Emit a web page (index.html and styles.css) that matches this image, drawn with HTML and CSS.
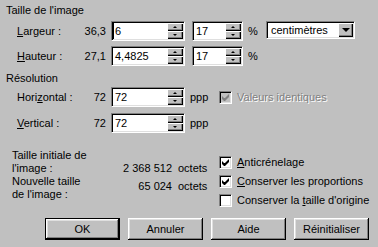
FILE: index.html
```html
<!DOCTYPE html>
<html lang="fr">
<head>
<meta charset="utf-8">
<title>Taille de l'image</title>
<link rel="stylesheet" href="styles.css">
</head>
<body>
<div class="dialog">
  <div class="title">Taille de l'image</div>
  <div class="rows">
    <div class="row">
      <span class="lbl"><u>L</u>argeur :</span>
      <span class="val">36,3</span>
      <div class="spin w74 focus"><span class="txt">6</span><div class="spinbtns"><span class="sb"><i class="up"></i></span><span class="sb"><i class="down"></i></span></div></div>
      <div class="spin w51"><span class="txt">17</span><div class="spinbtns"><span class="sb"><i class="up"></i></span><span class="sb"><i class="down"></i></span></div></div>
      <span class="unit">%</span>
      <div class="combo"><span class="txt">centimètres</span><span class="combo-btn"><i class="down big"></i></span></div>
    </div>
    <div class="row">
      <span class="lbl"><u>H</u>auteur :</span>
      <span class="val">27,1</span>
      <div class="spin w74"><span class="txt">4,4825</span><div class="spinbtns"><span class="sb"><i class="up"></i></span><span class="sb"><i class="down"></i></span></div></div>
      <div class="spin w51"><span class="txt">17</span><div class="spinbtns"><span class="sb"><i class="up"></i></span><span class="sb"><i class="down"></i></span></div></div>
      <span class="unit">%</span>
    </div>
  </div>
  <div class="title res">Résolution</div>
  <div class="rows res-rows">
    <div class="row">
      <span class="lbl">Hori<u>z</u>ontal :</span>
      <span class="val">72</span>
      <div class="spin w74"><span class="txt">72</span><div class="spinbtns"><span class="sb"><i class="up"></i></span><span class="sb"><i class="down"></i></span></div></div>
      <span class="ppp">ppp</span>
      <label class="check disabled"><span class="box"><svg width="7" height="7" viewBox="0 0 7 7"><polygon points="0,2 2,4 3,4 7,0 7,3 3,7 2,7 0,5"/></svg></span><span class="ctext">Valeurs identiques</span></label>
    </div>
    <div class="row">
      <span class="lbl"><u>V</u>ertical :</span>
      <span class="val">72</span>
      <div class="spin w74"><span class="txt">72</span><div class="spinbtns"><span class="sb"><i class="up"></i></span><span class="sb"><i class="down"></i></span></div></div>
      <span class="ppp">ppp</span>
    </div>
  </div>
  <div class="bottom">
    <div class="info">
      <span class="ilbl">Taille initiale de<br>l'image :</span>
      <span class="ival end">2 368 512</span>
      <span class="iunit end">octets</span>
      <span class="ilbl">Nouvelle taille<br>de l'image :</span>
      <span class="ival mid">65 024</span>
      <span class="iunit mid">octets</span>
    </div>
    <div class="checks">
      <label class="check"><span class="box"><svg width="7" height="7" viewBox="0 0 7 7"><polygon points="0,2 2,4 3,4 7,0 7,3 3,7 2,7 0,5"/></svg></span><span class="ctext"><u>A</u>nticrénelage</span></label>
      <label class="check"><span class="box"><svg width="7" height="7" viewBox="0 0 7 7"><polygon points="0,2 2,4 3,4 7,0 7,3 3,7 2,7 0,5"/></svg></span><span class="ctext"><u>C</u>onserver les proportions</span></label>
      <label class="check"><span class="box"></span><span class="ctext">Conserver la <u>t</u>aille d'origine</span></label>
    </div>
  </div>
  <div class="buttons">
    <button class="btn default">OK</button>
    <button class="btn">Annuler</button>
    <button class="btn">Aide</button>
    <button class="btn">Réinitialiser</button>
  </div>
</div>
</body>
</html>
```
FILE: styles.css
```css
* { box-sizing: border-box; }
html, body { margin: 0; padding: 0; }
body {
  background: #c0c0c0;
  font: 11px/13px "Liberation Sans", Arial, sans-serif;
  color: #000;
  width: 378px;
  height: 247px;
  overflow: hidden;
}
u { text-decoration: underline; text-underline-offset: 1px; }
.dialog { width: 378px; height: 247px; }
.title { padding: 4px 0 0 6px; height: 21px; }
.title.res { padding-top: 6px; height: 21px; }
.rows { padding-left: 17px; display: flex; flex-direction: column; gap: 5px; }
.res-rows { gap: 6px; }
.row { display: flex; align-items: center; height: 20px; }
.lbl { width: 57px; white-space: nowrap; }
.val { width: 32px; text-align: right; margin-right: 5px; }
.spin, .combo, .box {
  border: 1px solid;
  border-color: #808080 #fff #fff #808080;
  box-shadow: inset 1px 1px #000, inset -1px -1px #dfdfdf;
  background: #fff;
}
.spin { height: 20px; display: flex; align-items: center; padding: 1px; }
.spin.w74 { width: 74px; }
.spin.w51 { width: 51px; margin-left: 7px; }
.spin .txt { flex: 1; padding-left: 2px; line-height: 16px; }
.spin.focus .txt { border-left: 1px solid #000; padding-left: 1px; }
.spinbtns { width: 16px; height: 16px; display: flex; flex-direction: column; }
.sb {
  flex: 1;
  background: #c0c0c0;
  box-shadow: inset 1px 1px #fff, inset -1px -1px #000, inset -2px -2px #808080;
  display: flex; align-items: center; justify-content: center;
}
i.up, i.down { display: block; width: 0; height: 0; border-left: 2px solid transparent; border-right: 2px solid transparent; }
i.up { border-bottom: 2px solid #000; }
i.down { border-top: 2px solid #000; }
i.down.big { border-left-width: 4px; border-right-width: 4px; border-top-width: 4px; }
.unit { margin-left: 5px; width: 8px; }
.combo {
  margin-left: 10px; width: 89px; height: 18px; align-self: flex-start;
  display: flex; align-items: center; padding: 1px;
}
.combo .txt { flex: 1; padding-left: 3px; }
.combo-btn {
  width: 15px; height: 14px; background: #c0c0c0;
  box-shadow: inset 1px 1px #fff, inset -1px -1px #000, inset -2px -2px #808080;
  display: flex; align-items: center; justify-content: center;
}
.ppp { margin-left: 5px; width: 29px; }
.check { display: flex; align-items: center; height: 13px; }
.box { width: 13px; height: 13px; display: flex; align-items: center; justify-content: center; }
.box svg { fill: #000; }
.ctext { margin-left: 5px; white-space: nowrap; }
.check.disabled .box { background: #c0c0c0; }
.check.disabled .box svg { fill: #808080; }
.check.disabled .ctext { color: #808080; text-shadow: 1px 1px #fff; }
.bottom { display: flex; margin-top: 16px; height: 69px; }
.info {
  width: 219px; padding-left: 12px;
  display: grid; grid-template-columns: 88px 72px auto; grid-auto-rows: 26px;
  align-content: start;
}
.ival { text-align: right; }
.iunit { margin-left: 6px; }
.end { align-self: end; }
.mid { padding-top: 5px; }
.checks { display: flex; flex-direction: column; gap: 6px; padding-top: 7px; }
.buttons { display: flex; gap: 8px; padding-left: 45px; }
.btn {
  width: 75px; height: 22px; padding: 0; margin: 0;
  font: inherit; color: #000; background: #c0c0c0; border: none;
  box-shadow: inset -1px -1px #000, inset 1px 1px #fff, inset -2px -2px #808080, inset 2px 2px #dfdfdf;
}
.btn.default { border: 1px solid #000; }
```
